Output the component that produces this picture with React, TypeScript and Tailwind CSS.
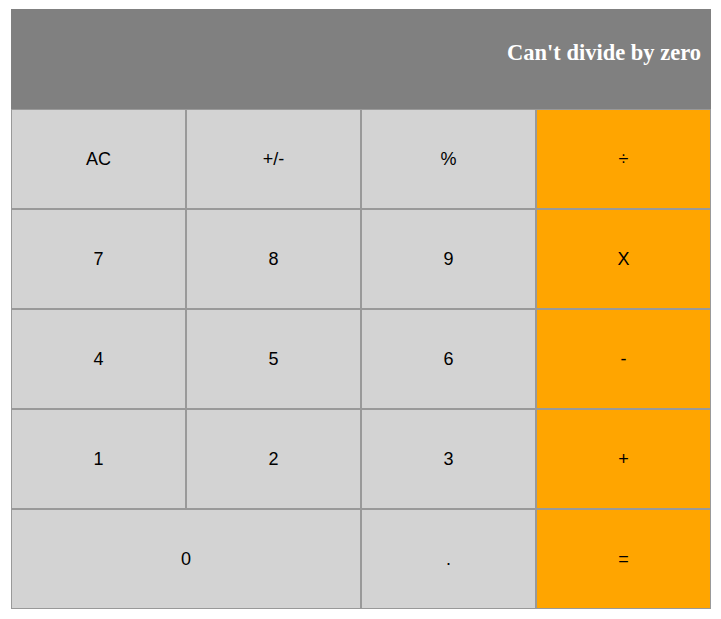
import React from "react";

const keys: { label: string; orange?: boolean; span?: boolean }[] = [
  { label: "AC" },
  { label: "+/-" },
  { label: "%" },
  { label: "÷", orange: true },
  { label: "7" },
  { label: "8" },
  { label: "9" },
  { label: "X", orange: true },
  { label: "4" },
  { label: "5" },
  { label: "6" },
  { label: "-", orange: true },
  { label: "1" },
  { label: "2" },
  { label: "3" },
  { label: "+", orange: true },
  { label: "0", span: true },
  { label: "." },
  { label: "=", orange: true },
];

export default function App() {
  return (
    <div className="pl-[11px] pt-[9px]">
      <div className="w-[700px]">
        <div
          className="h-[100px] bg-[#808080] flex items-center justify-end pr-[10px] pb-[13px] text-white font-bold text-[22.5px]"
          style={{ fontFamily: '"Liberation Serif", "Times New Roman", serif' }}
        >
          Can't divide by zero
        </div>
        <div
          className="grid grid-cols-[repeat(4,175px)] auto-rows-[100px]"
          style={{ fontFamily: '"Liberation Sans", Arial, sans-serif' }}
        >
          {keys.map((k) => (
            <div
              key={k.label}
              className={
                "border border-[#999999] flex items-center justify-center text-[18px] text-black " +
                (k.orange ? "bg-[#ffa500] " : "bg-[#d3d3d3] ") +
                (k.span ? "col-span-2" : "")
              }
            >
              {k.label}
            </div>
          ))}
        </div>
      </div>
    </div>
  );
}
